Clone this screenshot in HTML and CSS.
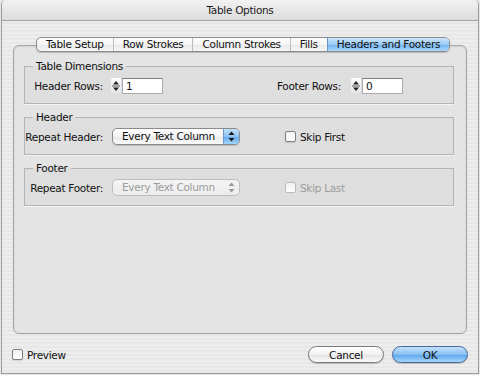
FILE: index.html
```html
<!DOCTYPE html>
<html lang="en">
<head>
  <meta charset="UTF-8">
  <title>Table Options</title>
  <link rel="stylesheet" href="styles.css">
</head>
<body>
  <div class="window">
    <div class="titlebar">Table Options</div>

    <div class="main">
      <div class="tabs">
        <span class="tab">Table Setup</span>
        <span class="tab">Row Strokes</span>
        <span class="tab">Column Strokes</span>
        <span class="tab">Fills</span>
        <span class="tab tab-active">Headers and Footers</span>
      </div>

      <div class="panel">
        <fieldset class="group">
          <legend>Table Dimensions</legend>
          <div class="row row-dims">
            <span class="field-label">Header Rows:</span>
            <div class="spin">
              <span class="stepper">
                <svg width="10" height="16" viewBox="0 0 10 16"><path d="M2 6.5 L5 3 L8 6.5 Z" fill="#222"/><path d="M2 9.5 L5 13 L8 9.5 Z" fill="#222"/><path d="M1 8 H9" stroke="#555" stroke-width="1"/></svg>
              </span>
              <span class="num-input">1</span>
            </div>
            <div class="spin">
              <span class="field-label footer-rows">Footer Rows:</span>
              <span class="stepper">
                <svg width="10" height="16" viewBox="0 0 10 16"><path d="M2 6.5 L5 3 L8 6.5 Z" fill="#222"/><path d="M2 9.5 L5 13 L8 9.5 Z" fill="#222"/><path d="M1 8 H9" stroke="#555" stroke-width="1"/></svg>
              </span>
              <span class="num-input">0</span>
            </div>
          </div>
        </fieldset>

        <fieldset class="group">
          <legend>Header</legend>
          <div class="row row-repeat">
            <span class="field-label">Repeat Header:</span>
            <div class="popup">
              <span class="popup-text">Every Text Column</span>
              <span class="popup-arrows">
                <svg width="15" height="15" viewBox="0 0 15 15"><path d="M4.5 6 L7.5 2.5 L10.5 6 Z" fill="#1a1a1a"/><path d="M4.5 9 L7.5 12.5 L10.5 9 Z" fill="#1a1a1a"/></svg>
              </span>
            </div>
            <label class="check"><span class="box"></span>Skip First</label>
          </div>
        </fieldset>

        <fieldset class="group">
          <legend>Footer</legend>
          <div class="row row-repeat">
            <span class="field-label">Repeat Footer:</span>
            <div class="popup popup-disabled">
              <span class="popup-text">Every Text Column</span>
              <span class="popup-arrows">
                <svg width="15" height="15" viewBox="0 0 15 15"><path d="M4.5 6 L7.5 2.5 L10.5 6 Z" fill="#9a9a9a"/><path d="M4.5 9 L7.5 12.5 L10.5 9 Z" fill="#9a9a9a"/></svg>
              </span>
            </div>
            <label class="check check-disabled"><span class="box"></span>Skip Last</label>
          </div>
        </fieldset>
      </div>

      <div class="bottombar">
        <label class="check"><span class="box"></span>Preview</label>
        <div class="buttons">
          <button class="btn">Cancel</button>
          <button class="btn btn-default">OK</button>
        </div>
      </div>
    </div>
  </div>
</body>
</html>
```

FILE: styles.css
```css
body {
  margin: 0;
  background: #e6e6e6;
  font-family: 'DejaVu Sans', 'Liberation Sans', sans-serif;
  font-size: 10.5px;
  letter-spacing: -0.3px;
  color: #111;
}

.window {
  box-sizing: border-box;
  width: 478px;
  height: 374px;
  margin-left: 1px;
  border: 1px solid #9a9a9a;
  border-top: none;
  border-radius: 5px 5px 0 0;
  background: repeating-linear-gradient(#ededed 0, #ededed 2px, #e7e7e7 2px, #e7e7e7 4px);
  display: flex;
  flex-direction: column;
  overflow: hidden;
}

.titlebar {
  height: 20px;
  line-height: 20px;
  text-align: center;
  background: linear-gradient(#f2f2f2, #dcdcdc);
  border-bottom: 1px solid #a2a2a2;
  color: #1a1a1a;
}

.main {
  flex: 1;
  display: flex;
  flex-direction: column;
  padding-top: 16px;
}

/* segmented tab control */
.tabs {
  align-self: center;
  display: flex;
  box-sizing: border-box;
  height: 15px;
  margin-bottom: -7px;
  margin-left: 6px;
  border: 1px solid #8b8b8b;
  border-radius: 5px;
  overflow: hidden;
  background: linear-gradient(#ffffff, #f4f4f4 50%, #e8e8e8 51%, #f6f6f6);
  box-shadow: 0 1px 1px rgba(0, 0, 0, 0.2);
  position: relative;
  z-index: 1;
}

.tab {
  line-height: 13px;
  padding: 0 9px;
  border-left: 1px solid #bdbdbd;
  white-space: nowrap;
}

.tab:first-child {
  border-left: none;
}

.tab-active {
  background: linear-gradient(#cde6fc, #98c9f5 50%, #73b3f0 51%, #aad8fc);
  border-left-color: #6a95c6;
}

.panel {
  flex: 1;
  margin: 0 11px 12px;
  padding: 14px 12px 0 10px;
  border: 1px solid #a3a3a3;
  border-radius: 6px;
  background: #e4e4e4;
  box-shadow: inset 0 1px 2px rgba(0, 0, 0, 0.08);
  display: flex;
  flex-direction: column;
  gap: 7px;
}

.group {
  margin: 0;
  min-width: 0;
  padding: 4px 10px 9px 0;
  border: 1px solid #b4b4b4;
  background: rgba(0, 0, 0, 0.025);
  box-shadow: 0 1px 0 #f4f4f4;
}

.group legend {
  margin-left: 8px;
  padding: 0 3px;
  line-height: 13px;
}

.row {
  display: grid;
  column-gap: 8px;
  align-items: center;
  height: 17px;
}

.row-dims {
  grid-template-columns: 78px 158px auto;
}

.row-repeat {
  grid-template-columns: 78px 166px auto;
}

.field-label {
  text-align: right;
  white-space: nowrap;
}

.spin {
  display: flex;
  align-items: center;
  gap: 1px;
}

.footer-rows {
  margin-right: 9px;
}

.stepper {
  display: block;
  width: 10px;
  height: 16px;
  background: linear-gradient(#fdfdfd, #e2e2e2);
  border-radius: 2px;
}

.stepper svg {
  display: block;
}

.num-input {
  box-sizing: border-box;
  width: 41px;
  height: 16px;
  line-height: 14px;
  padding-left: 3px;
  background: #fff;
  border: 1px solid #aaa;
  border-top-color: #7d7d7d;
}

/* pop-up menu */
.popup {
  box-sizing: border-box;
  width: 128px;
  height: 17px;
  margin-left: 1px;
  display: flex;
  border: 1px solid #8a8a8a;
  border-radius: 5px;
  overflow: hidden;
  background: linear-gradient(#ffffff, #f3f3f3 50%, #e9e9e9 51%, #fafafa);
  box-shadow: 0 1px 1px rgba(0, 0, 0, 0.15);
}

.popup-text {
  flex: 1;
  line-height: 15px;
  padding-left: 9px;
  white-space: nowrap;
}

.popup-arrows {
  width: 15px;
  background: linear-gradient(#c3e0fb, #8cc3f4 50%, #62a8ee 51%, #a2d3fb);
  border-left: 1px solid #6d98c8;
}

.popup-arrows svg {
  display: block;
}

.popup-disabled {
  border-color: #bdbdbd;
  background: linear-gradient(#f4f4f4, #ececec);
  box-shadow: none;
}

.popup-disabled .popup-text {
  color: #9c9c9c;
}

.popup-disabled .popup-arrows {
  background: transparent;
  border-left-color: transparent;
}

/* checkbox */
.check {
  display: flex;
  align-items: center;
  gap: 4px;
}

.box {
  box-sizing: border-box;
  width: 11px;
  height: 11px;
  border: 1px solid #7e7e7e;
  border-radius: 2px;
  background: linear-gradient(#f0f0f0, #ffffff);
  box-shadow: 0 1px 1px rgba(0, 0, 0, 0.12);
}

.check-disabled {
  color: #9c9c9c;
}

.check-disabled .box {
  border-color: #bcbcbc;
  box-shadow: none;
}

.bottombar {
  display: flex;
  align-items: center;
  height: 17px;
  padding: 0 10px;
  margin-bottom: 10px;
}

.buttons {
  margin-left: auto;
  display: flex;
  gap: 8px;
}

.btn {
  box-sizing: border-box;
  width: 76px;
  height: 17px;
  padding: 0;
  font: inherit;
  letter-spacing: inherit;
  color: #111;
  border: 1px solid #7a7a7a;
  border-radius: 9px;
  background: linear-gradient(#ffffff, #f1f1f1 50%, #e2e2e2 51%, #fbfbfb);
  box-shadow: 0 1px 1px rgba(0, 0, 0, 0.2);
}

.btn-default {
  border-color: #44689a;
  background: linear-gradient(#c6e1fb, #86bff4 50%, #5aa3ec 51%, #a7d6fc);
}
```
